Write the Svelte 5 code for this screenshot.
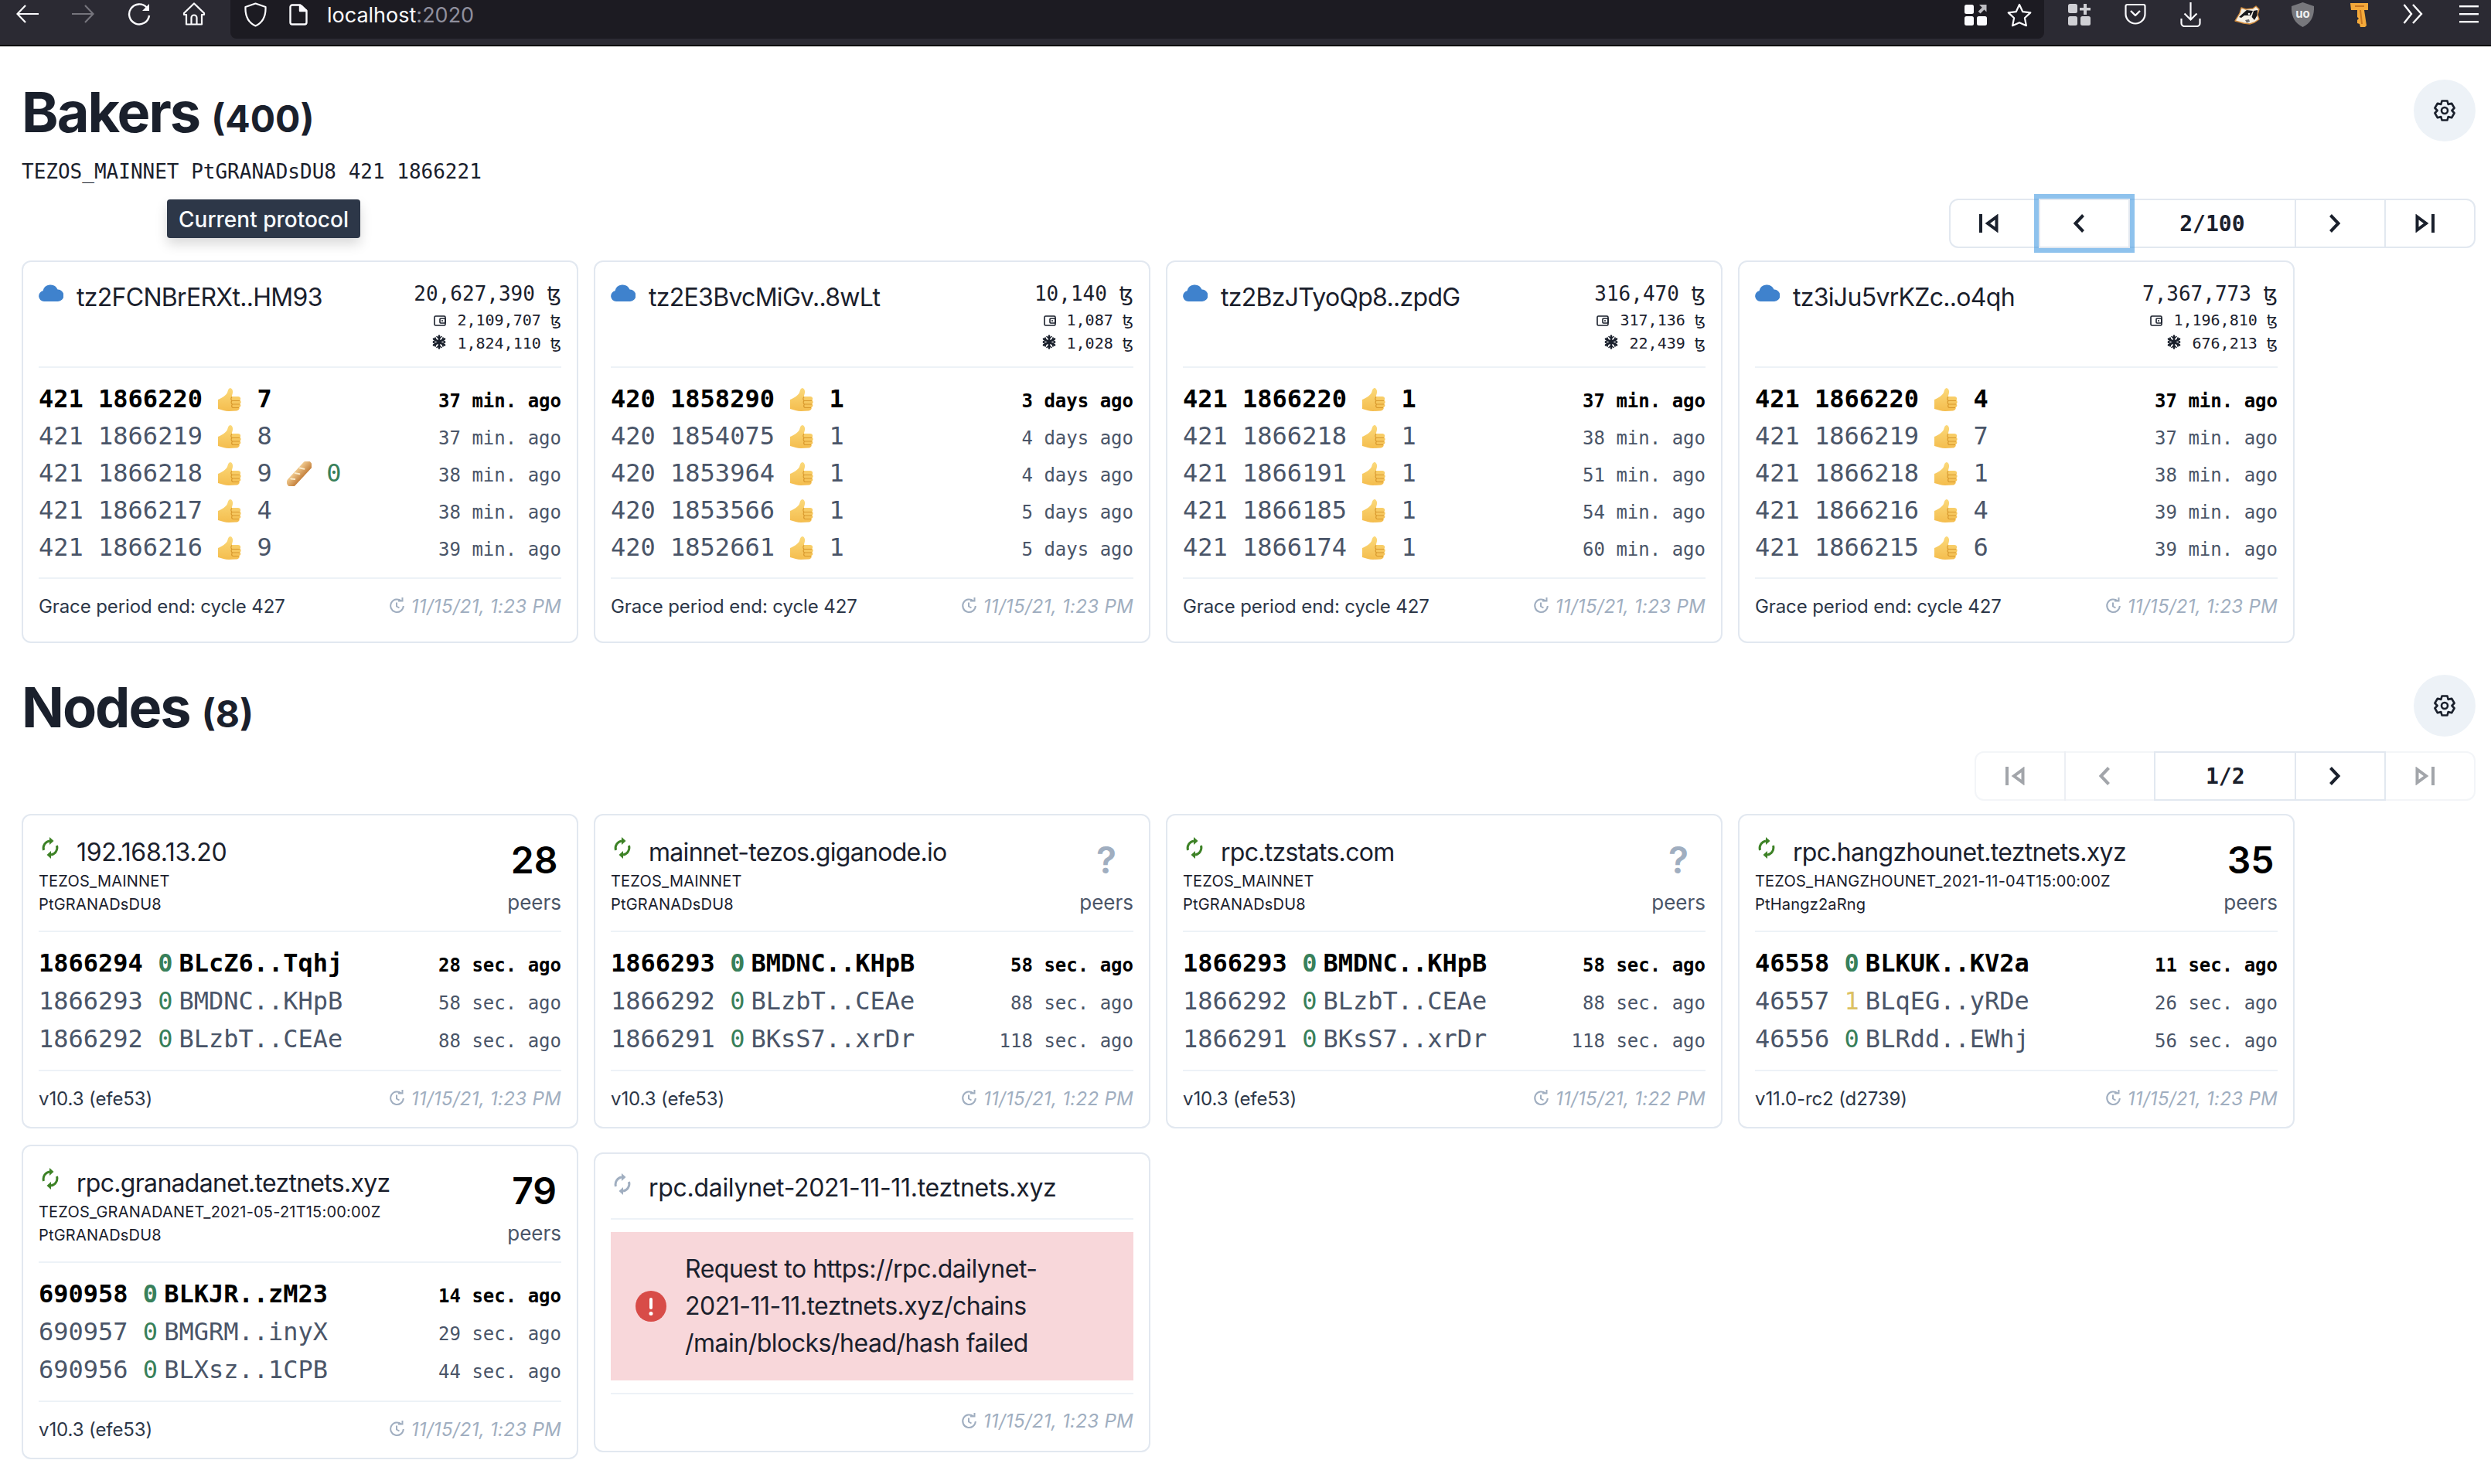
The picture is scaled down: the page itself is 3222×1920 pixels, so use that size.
<script>
	const grace = 'Grace period end: cycle 427';

	const bakers = [
		{
			addr: 'tz2FCNBrERXt..HM93', total: '20,627,390', spendable: '2,109,707', frozen: '1,824,110',
			rows: [
				['421 1866220', 7, '37 min. ago'],
				['421 1866219', 8, '37 min. ago'],
				['421 1866218', 9, '38 min. ago', 0],
				['421 1866217', 4, '38 min. ago'],
				['421 1866216', 9, '39 min. ago']
			]
		},
		{
			addr: 'tz2E3BvcMiGv..8wLt', total: '10,140', spendable: '1,087', frozen: '1,028',
			rows: [
				['420 1858290', 1, '3 days ago'],
				['420 1854075', 1, '4 days ago'],
				['420 1853964', 1, '4 days ago'],
				['420 1853566', 1, '5 days ago'],
				['420 1852661', 1, '5 days ago']
			]
		},
		{
			addr: 'tz2BzJTyoQp8..zpdG', total: '316,470', spendable: '317,136', frozen: '22,439',
			rows: [
				['421 1866220', 1, '37 min. ago'],
				['421 1866218', 1, '38 min. ago'],
				['421 1866191', 1, '51 min. ago'],
				['421 1866185', 1, '54 min. ago'],
				['421 1866174', 1, '60 min. ago']
			]
		},
		{
			addr: 'tz3iJu5vrKZc..o4qh', total: '7,367,773', spendable: '1,196,810', frozen: '676,213',
			rows: [
				['421 1866220', 4, '37 min. ago'],
				['421 1866219', 7, '37 min. ago'],
				['421 1866218', 1, '38 min. ago'],
				['421 1866216', 4, '39 min. ago'],
				['421 1866215', 6, '39 min. ago']
			]
		}
	];

	const giga = [
		['1866293', 0, 'BMDNC..KHpB', '58 sec. ago'],
		['1866292', 0, 'BLzbT..CEAe', '88 sec. ago'],
		['1866291', 0, 'BKsS7..xrDr', '118 sec. ago']
	];

	const nodes = [
		{
			host: '192.168.13.20', chain: 'TEZOS_MAINNET', proto: 'PtGRANADsDU8', peers: '28', version: 'v10.3 (efe53)', at: '1:23',
			rows: [
				['1866294', 0, 'BLcZ6..Tqhj', '28 sec. ago'],
				['1866293', 0, 'BMDNC..KHpB', '58 sec. ago'],
				['1866292', 0, 'BLzbT..CEAe', '88 sec. ago']
			]
		},
		{ host: 'mainnet-tezos.giganode.io', chain: 'TEZOS_MAINNET', proto: 'PtGRANADsDU8', peers: '?', version: 'v10.3 (efe53)', at: '1:22', rows: giga },
		{ host: 'rpc.tzstats.com', chain: 'TEZOS_MAINNET', proto: 'PtGRANADsDU8', peers: '?', version: 'v10.3 (efe53)', at: '1:22', rows: giga },
		{
			host: 'rpc.hangzhounet.teztnets.xyz', chain: 'TEZOS_HANGZHOUNET_2021-11-04T15:00:00Z', proto: 'PtHangz2aRng', peers: '35', version: 'v11.0-rc2 (d2739)', at: '1:23',
			rows: [
				['46558', 0, 'BLKUK..KV2a', '11 sec. ago'],
				['46557', 1, 'BLqEG..yRDe', '26 sec. ago'],
				['46556', 0, 'BLRdd..EWhj', '56 sec. ago']
			]
		},
		{
			host: 'rpc.granadanet.teztnets.xyz', chain: 'TEZOS_GRANADANET_2021-05-21T15:00:00Z', proto: 'PtGRANADsDU8', peers: '79', version: 'v10.3 (efe53)', at: '1:23',
			rows: [
				['690958', 0, 'BLKJR..zM23', '14 sec. ago'],
				['690957', 0, 'BMGRM..inyX', '29 sec. ago'],
				['690956', 0, 'BLXsz..1CPB', '44 sec. ago']
			]
		}
	];

	// six flat teeth around a ring
	function gearPath() {
		let d = '';
		for (let i = 0; i < 6; i++) {
			const a = (i * Math.PI) / 3 - Math.PI / 2;
			const pts = [[9.4, -0.52], [13, -0.27], [13, 0.27], [9.4, 0.52]];
			for (const [r, o] of pts) {
				const x = 14 + r * Math.cos(a + o);
				const y = 14 + r * Math.sin(a + o);
				d += (d ? 'L' : 'M') + x.toFixed(2) + ' ' + y.toFixed(2);
			}
		}
		return d + 'Z';
	}
	const gear = gearPath();
</script>

{#snippet settings()}
	<button class="gear-btn" type="button" aria-label="Settings">
		<svg width="28" height="28" viewBox="0 0 28 28" fill="none" stroke="#1a202c" stroke-width="2.6" stroke-linejoin="round">
			<path d={gear} />
			<circle cx="14" cy="14" r="4" />
		</svg>
	</button>
{/snippet}

{#snippet firstIcon()}
	<svg width="25" height="24" viewBox="0 0 25 24"><rect x="0" y="0" width="4" height="24" fill="currentColor" /><path d="M22.5 3.5v17L11 12z" fill="none" stroke="currentColor" stroke-width="4" /></svg>
{/snippet}
{#snippet lastIcon()}
	<svg width="25" height="24" viewBox="0 0 25 24"><rect x="21" y="0" width="4" height="24" fill="currentColor" /><path d="M2.5 3.5v17L14 12z" fill="none" stroke="currentColor" stroke-width="4" /></svg>
{/snippet}
{#snippet prevIcon()}
	<svg width="16" height="24" viewBox="0 0 16 24"><path d="M13.5 1.5L3.5 12l10 10.500" fill="none" stroke="currentColor" stroke-width="4" /></svg>
{/snippet}
{#snippet nextIcon()}
	<svg width="16" height="24" viewBox="0 0 16 24"><path d="M2.500 1.500L12.500 12l-10 10.500" fill="none" stroke="currentColor" stroke-width="4" /></svg>
{/snippet}

{#snippet clock()}
	<svg class="clock" width="19" height="20" viewBox="0 0 19 20" fill="none" stroke="#a0aec0" stroke-width="2">
		<path d="M15 3.500A8.300 8.300 0 1 0 17.800 10" />
		<path d="M11 3.500h5.500V-1" />
		<path d="M9 5.500V10.500l3.500 2" />
	</svg>
{/snippet}

{#snippet sync(color)}
	<svg class="status sync" width="24" height="28" viewBox="0 0 24 28" fill="none" stroke={color} stroke-width="3">
		<path d="M3.500 17A9.500 9.500 0 0 1 11 5" />
		<path d="M20.500 11A9.500 9.500 0 0 1 13 23" />
		<path d="M11 0l5.500 5L11 10z" fill={color} stroke="none" />
		<path d="M13 18l-5.500 5 5.500 5z" fill={color} stroke="none" />
	</svg>
{/snippet}

{#snippet thumb()}
	<svg class="emoji" width="32" height="32" viewBox="0 0 32 32">
		<defs>
			<linearGradient id="thumbfill" x1="0" y1="0" x2="0" y2="1"><stop offset="0" stop-color="#fbd97a" /><stop offset="1" stop-color="#f4bd4e" /></linearGradient>
		</defs>
		<path d="M1 16C6 14 11 11 13 7C14 4 14 2 16.500 1C19 1 20.500 4 20 7C19.600 9 19 10.500 19 12L27 12C30 12 31 15 29.500 16.500C31 18 31 20.500 29.500 21.500C31 23 30.500 25.500 28.500 26C29.500 28 27.500 30.500 25 30.500L15 31C10 31 6 29 1 28Z" fill="url(#thumbfill)" />
		<path d="M19 17.500H29M19.500 22H29M20 26.500H28M19 12.500C17.500 14 17.500 16 19 17.500C17.500 19 18 21 19.500 22C18.500 23.500 18.500 25.500 20 26.500" fill="none" stroke="#d8982c" stroke-width="1.200" />
	</svg>
{/snippet}

{#snippet baguette()}
	<svg class="emoji" width="32" height="32" viewBox="0 0 32 32">
		<defs>
			<linearGradient id="breadfill" x1="0" y1="0" x2="0" y2="1"><stop offset="0" stop-color="#f0c98d" /><stop offset="1" stop-color="#c4803c" /></linearGradient>
		</defs>
		<g transform="rotate(-47 16 16)">
			<rect x="-5" y="10" width="42" height="12.500" rx="6.200" fill="url(#breadfill)" />
			<path d="M4 12.500l3 4M13 11.500l3 5M22 11.500l3 5" stroke="#fbeccb" stroke-width="2" stroke-linecap="round" />
		</g>
	</svg>
{/snippet}

{#snippet pager(page, disabled)}
	<div class="pager">
		<button class="pg ico" class:off={disabled.includes('first')} type="button" aria-label="First">{@render firstIcon()}</button>
		<button class="pg ico" class:off={disabled.includes('prev')} class:focus={!disabled.includes('prev')} type="button" aria-label="Previous">{@render prevIcon()}</button>
		<button class="pg num" type="button">{page}</button>
		<button class="pg ico" class:off={disabled.includes('next')} type="button" aria-label="Next">{@render nextIcon()}</button>
		<button class="pg ico" class:off={disabled.includes('last')} type="button" aria-label="Last">{@render lastIcon()}</button>
	</div>
{/snippet}

<header class="chrome">
	<svg class="ci" style="margin-left:21px" width="29" height="30" viewBox="0 0 29 30" fill="none" stroke="#fbfbfe" stroke-width="2.200"><path d="M29 15H2M12 4L1.500 15 12 26" /></svg>
	<svg class="ci" style="margin-left:43px" width="29" height="30" viewBox="0 0 29 30" fill="none" stroke="#75747c" stroke-width="2.200"><path d="M0 15H27M17 4l10.500 11L17 26" /></svg>
	<svg class="ci" style="margin-left:43px" width="30" height="30" viewBox="0 0 30 30" fill="none" stroke="#fbfbfe" stroke-width="2.400"><path d="M25 7A13 13 0 1 0 28 17" /><path d="M28 2v9H19z" fill="#fbfbfe" stroke="none" /></svg>
	<svg class="ci" style="margin-left:41px" width="30" height="30" viewBox="0 0 30 30" fill="none" stroke="#fbfbfe" stroke-width="2.200" stroke-linejoin="round"><path d="M15 1.500L2 14v2h3v12.500h20V16h3v-2z" /><path d="M11.500 28.500V20a3.500 3.500 0 0 1 7 0v8.500" /></svg>
	<div class="urlbar">
		<svg width="29" height="32" viewBox="0 0 29 32" fill="none" stroke="#fbfbfe" stroke-width="2.200" stroke-linejoin="round"><path d="M14.500 1.500L27.500 6c.5 11-3 20-13 24.500C4.500 26 1 17 1.500 6z" /></svg>
		<svg style="margin-left:29px" width="24" height="28" viewBox="0 0 24 28" fill="none" stroke="#fbfbfe" stroke-width="2.400" stroke-linejoin="round"><path d="M4 1.500h10v7.500h8.500V24a2.500 2.500 0 0 1-2.500 2.500H4A2.500 2.500 0 0 1 1.500 24V4A2.500 2.500 0 0 1 4 1.500z" /><path d="M14 1.500l8.500 7.500" /><path d="M14 1.500h2.500l6 6V9H14z" fill="#fbfbfe" stroke="none" /></svg>
		<span class="url">localhost<span class="port">:2020</span></span>
		<svg class="push" width="29" height="28" viewBox="0 0 29 28" fill="#fbfbfe"><rect width="12" height="12" rx="2.500" y="1" /><rect x="0" y="16" width="12" height="12" rx="2.500" /><rect x="16" y="16" width="13" height="12" rx="2.500" /><path d="M19 1h9.500v9.500l-3-3-5 5-2.800-2.800 5-5z" fill="#bdbdc2" /></svg>
		<svg style="margin-left:26px" width="32" height="31" viewBox="0 0 32 31" fill="none" stroke="#fbfbfe" stroke-width="2.200" stroke-linejoin="round"><path d="M16 2l4.300 9.200 10 1.200-7.400 6.900 2 9.900L16 25.300l-8.900 3.900 2-9.900-7.400-6.900 10-1.200z" /></svg>
	</div>
	<svg class="ci" style="margin-left:31px" width="29" height="30" viewBox="0 0 29 30" fill="#cfcfd4"><rect y="2" width="12" height="12" rx="2.500" /><rect y="18" width="12" height="12" rx="2.500" /><rect x="16" y="18" width="13" height="12" rx="2.500" /><path d="M20 2h4v5h5v3.500h-5V16h-4v-5.500h-5V7h5z" /></svg>
	<svg class="ci" style="margin-left:44px" width="28" height="30" viewBox="0 0 28 30" fill="none" stroke="#fbfbfe" stroke-width="2.200" stroke-linejoin="round"><path d="M3.500 3h21A2 2 0 0 1 26.500 5v10a12.500 12.500 0 0 1-25 0V5a2 2 0 0 1 2-2z" /><path d="M8 11l6 6 6-6" stroke-width="2.400" /></svg>
	<svg class="ci" style="margin-left:44px" width="27" height="32" viewBox="0 0 27 32" fill="none" stroke="#fbfbfe" stroke-width="2.200"><path d="M13.500 0v22M5.500 14.500l8 8 8-8" /><path d="M1.500 21v6a4 4 0 0 0 4 4h16a4 4 0 0 0 4-4v-6" /></svg>
	<svg class="ci badger" style="margin-left:43px" width="33" height="25" viewBox="0 0 33 25">
		<path d="M1 20L7 10 9 3 15 5 24 4 28 1 32 5 30 12 32 18 26 22 20 24 12 23Z" fill="#f5f0e5" stroke="#d08a3c" stroke-width="1.400" stroke-linejoin="round" />
		<path d="M6 15L16 6 24 7 21 13 13 13 9 16Z" fill="#19191c" />
		<path d="M25 7L30 6 29.500 13 26 19 22.500 15Z" fill="#19191c" />
		<circle cx="19" cy="11" r="1.300" fill="#fff" />
		<path d="M14 19l5-1 1 3-4 1.500z" fill="#6a6a6e" />
	</svg>
	<svg class="ci" style="margin-left:41px" width="29" height="32" viewBox="0 0 29 32">
		<path d="M14.500 0L29 5c.5 12-3 21-14.500 27C3 26-.5 17 0 5z" fill="#77777c" />
		<text x="14.500" y="20" text-anchor="middle" font-family="Inter, sans-serif" font-size="15" font-weight="700" fill="#f0f0f0">uo</text>
	</svg>
	<svg class="ci" style="margin-left:47px" width="23" height="32" viewBox="0 0 23 32">
		<path d="M0 1h23v9h-5l3 20-2 2h-6l-1-4-3-1v-4l2-2-2-2V10H1z" fill="#f4a93a" />
		<path d="M6 4h12v2H6zM12 10h2l2 18h-2z" fill="#c9761f" />
	</svg>
	<svg class="ci" style="margin-left:45px" width="26" height="30" viewBox="0 0 26 30" fill="none" stroke="#fbfbfe" stroke-width="2.400"><path d="M1.500 3L11 15 1.500 27M13 3L24 15 13 27" /></svg>
	<svg class="ci" style="margin-left:47px" width="25" height="30" viewBox="0 0 25 30" fill="#fbfbfe"><rect y="4" width="25" height="2.400" /><rect y="14" width="25" height="2.400" /><rect y="24" width="25" height="2.400" /></svg>
</header>

<main class="page">
	<section class="bakers-sec">
		<div class="sec-head">
			<h1>Bakers <small>(400)</small></h1>
			{@render settings()}
		</div>
		<div class="proto-line">TEZOS_MAINNET PtGRANADsDU8 421 1866221</div>
		<div class="pager-row">
			<div class="tooltip">Current protocol</div>
			{@render pager('2/100', [])}
		</div>
		<div class="cards">
			{#each bakers as b}
				<article class="card baker">
					<div class="head">
						<div class="host">
							<svg class="status cloud" width="32" height="22" viewBox="0 0 32 22"><path d="M7 22a7 7 0 0 1-1.500-13.800A10 10 0 0 1 24.500 6.600 7.600 7.600 0 0 1 25 22z" fill="#3f82cd" /></svg>
							<span>{b.addr}</span>
						</div>
						<div class="stakes">
							<div class="stake big">{b.total} <span class="tez">ꜩ</span></div>
							<div class="stake">
								<svg class="mini" width="16" height="14" viewBox="0 0 16 14" fill="none" stroke="#1a202c" stroke-width="1.600"><rect x="1" y="1" width="14" height="12" rx="1.500" /><rect x="8" y="4" width="7" height="6" rx="1" /><circle cx="11" cy="7" r="1" fill="#1a202c" stroke="none" /></svg>
								{b.spendable} <span class="tez">ꜩ</span>
							</div>
							<div class="stake">
								<svg class="mini" width="18" height="19" viewBox="0 0 18 19" fill="none" stroke="#1a202c" stroke-width="2.600" stroke-linecap="round"><path d="M9 1.500v16M2 5.500l14 8M16 5.500l-14 8" /><path d="M6 2.500l3 2.500 3-2.500M6 16.500l3-2.500 3 2.500M1.500 9l3.500-1.500L4 4M16.500 9L13 7.500 14 4M1.500 10l3.500 1.500L4 15M16.500 10L13 11.500 14 15" stroke-width="1.600" /></svg>
								{b.frozen} <span class="tez">ꜩ</span>
							</div>
						</div>
					</div>
					<hr />
					<div class="rows">
						{#each b.rows as r, i}
							<div class="row" class:top={i === 0}>
								<span class="left">{r[0]} {@render thumb()} {r[1]}{#if r[3] !== undefined}{' '}{@render baguette()} <span class="ok">{r[3]}</span>{/if}</span>
								<span class="ago">{r[2]}</span>
							</div>
						{/each}
					</div>
					<hr />
					<div class="foot">
						<span>{grace}</span>
						<span class="stamp">{@render clock()}11/15/21, 1:23 PM</span>
					</div>
				</article>
			{/each}
		</div>
	</section>

	<section class="nodes-sec">
		<div class="sec-head">
			<h1>Nodes <small>(8)</small></h1>
			{@render settings()}
		</div>
		<div class="pager-row">
			{@render pager('1/2', ['first', 'prev', 'last'])}
		</div>
		<div class="cards">
			{#each nodes as n}
				<article class="card node">
					<div class="head">
						<div class="who">
							<div class="host" class:numeric={/\d\d/.test(n.host)}>
								{@render sync('#3d8226')}
								<span>{n.host}</span>
							</div>
							<div class="meta">{n.chain}</div>
							<div class="meta">{n.proto}</div>
						</div>
						<div class="peers">
							<div class="count" class:unknown={n.peers === '?'}>{n.peers}</div>
							<div class="peers-lbl">peers</div>
						</div>
					</div>
					<hr />
					<div class="rows">
						{#each n.rows as r, i}
							<div class="row" class:top={i === 0}>
								<span class="left">{r[0]} <span class={r[1] === 0 ? 'ok' : 'warn'}>{r[1]}</span><span class="hash">{r[2]}</span></span>
								<span class="ago">{r[3]}</span>
							</div>
						{/each}
					</div>
					<hr />
					<div class="foot">
						<span>{n.version}</span>
						<span class="stamp">{@render clock()}11/15/21, {n.at} PM</span>
					</div>
				</article>
			{/each}

			<article class="card node failed">
				<div class="head">
					<div class="host numeric">
						{@render sync('#a0aec0')}
						<span>rpc.dailynet-2021-11-11.teztnets.xyz</span>
					</div>
				</div>
				<hr />
				<div class="alert">
					<svg width="40" height="40" viewBox="0 0 40 40"><circle cx="20" cy="20" r="20" fill="#d84c48" /><rect x="18" y="9" width="4" height="15" rx="2" fill="#fff" /><circle cx="20" cy="29.500" r="2.500" fill="#fff" /></svg>
					<p>Request to https://rpc.dailynet-<br />2021-11-11.teztnets.xyz/chains<br />/main/blocks/head/hash failed</p>
				</div>
				<hr />
				<div class="foot end">
					<span class="stamp">{@render clock()}11/15/21, 1:23 PM</span>
				</div>
			</article>
		</div>
	</section>
</main>

<style>
	:global(body) {
		margin: 0;
		background: #ffffff;
		color: #1a202c;
		font-family: Inter, "Noto Sans", sans-serif;
	}

	.chrome {
		display: flex;
		align-items: flex-start;
		height: 58px;
		background: #2b2a33;
		border-bottom: 2px solid #0c0c0d;
	}

	.ci {
		flex-shrink: 0;
		margin-top: 3px;
	}

	.ci.badger {
		margin-top: 7px;
	}

	.urlbar {
		display: flex;
		align-items: center;
		flex: none;
		width: 2346px;
		height: 50px;
		margin-left: 32px;
		padding: 0 16px 12px 18px;
		box-sizing: border-box;
		background: #1c1b22;
		border-radius: 0 0 8px 8px;
	}

	.url {
		margin-left: 25px;
		font-size: 27px;
		color: #fbfbfe;
	}

	.port {
		color: #8f8f9d;
	}

	.push {
		margin-left: auto;
	}

	.page {
		padding: 0 20px 0 28px;
	}

	.bakers-sec {
		padding-top: 43px;
	}

	.nodes-sec {
		padding-top: 41px;
	}

	.sec-head {
		display: flex;
		justify-content: space-between;
		align-items: center;
		height: 80px;
	}

	h1 {
		margin: 0;
		padding-top: 12px;
		font-size: 72px;
		line-height: 80px;
		font-weight: 700;
		letter-spacing: -2px;
		color: #1a202c;
	}

	h1 small {
		font-size: 48px;
		letter-spacing: 0;
	}

	.gear-btn {
		display: flex;
		align-items: center;
		justify-content: center;
		width: 80px;
		height: 80px;
		padding: 0;
		border: 0;
		border-radius: 50%;
		background: #edf2f7;
	}

	.proto-line {
		margin-top: 19px;
		font-family: "DejaVu Sans Mono", monospace;
		font-size: 26px;
		line-height: 40px;
	}

	.pager-row {
		position: relative;
		display: flex;
		justify-content: flex-end;
		margin-top: 15px;
		margin-bottom: 16px;
	}

	.nodes-sec .pager-row {
		margin-top: 19px;
		margin-bottom: 17px;
	}

	.tooltip {
		position: absolute;
		left: 188px;
		top: 1px;
		width: 250px;
		height: 50px;
		padding-top: 2px;
		box-sizing: border-box;
		display: flex;
		align-items: center;
		justify-content: center;
		background: #2d3748;
		color: #f7fafc;
		font-size: 28px;
		font-weight: 500;
		border-radius: 4px;
		box-shadow: 0 8px 16px rgba(0, 0, 0, 0.15);
	}

	.pager {
		display: flex;
		height: 64px;
	}

	.pg {
		display: flex;
		align-items: center;
		justify-content: center;
		box-sizing: border-box;
		height: 64px;
		margin-left: -2px;
		border: 2px solid #e2e8f0;
		background: #ffffff;
		color: #1a202c;
	}

	.pg.ico {
		width: 118px;
		padding: 0 14px 0 0;
	}

	.pg:first-child {
		border-radius: 12px 0 0 12px;
	}

	.pg:last-child {
		border-radius: 0 12px 12px 0;
	}

	.pg.num {
		padding: 0 64.500px;
		font-family: "DejaVu Sans Mono", monospace;
		font-size: 28px;
		font-weight: 700;
	}

	.pg.off {
		opacity: 0.4;
	}

	.pg.focus {
		z-index: 1;
		box-shadow: 0 0 0 6px rgba(66, 153, 225, 0.6);
	}

	.cards {
		display: flex;
		flex-wrap: wrap;
		align-items: center;
		gap: 21px 20px;
	}

	.card {
		width: 720px;
		box-sizing: border-box;
		padding: 20px 20px 19px;
		border: 2px solid #e2e8f0;
		border-radius: 12px;
	}

	hr {
		margin: 0;
		border: 0;
		border-top: 2px solid #edf2f7;
	}

	.head {
		display: flex;
		justify-content: space-between;
	}

	.host {
		display: flex;
		align-items: center;
		height: 46px;
		font-size: 32px;
		letter-spacing: -0.7px;
		color: #1a202c;
		white-space: nowrap;
	}

	.host.numeric {
		letter-spacing: -0.3px;
	}

	.status {
		margin-bottom: 10px;
		flex-shrink: 0;
	}

	.cloud {
		margin-right: 17px;
	}

	.sync {
		margin-left: 3px;
		margin-right: 22px;
	}

	.baker .head {
		height: 100px;
		margin-bottom: 15px;
	}

	.baker .host {
		margin-top: 2px;
	}

	.stakes {
		padding-top: 2px;
		font-family: "DejaVu Sans Mono", monospace;
		font-size: 20px;
		line-height: 30px;
		text-align: right;
	}

	.stake {
		white-space: nowrap;
	}

	.stake.big {
		font-size: 26px;
		line-height: 38px;
	}

	.tez {
		font-family: "DejaVu Sans Mono", "DejaVu Sans", "Noto Sans", monospace;
	}

	.mini {
		vertical-align: -1px;
		margin-right: 2px;
	}

	.rows {
		display: flex;
		flex-direction: column;
		margin: 16px 0 15px;
	}

	.row {
		display: flex;
		justify-content: space-between;
		align-items: baseline;
		height: 48px;
		line-height: 48px;
		font-family: "DejaVu Sans Mono", monospace;
		color: #4a5568;
		white-space: pre;
	}

	.node .row {
		height: 49px;
		line-height: 49px;
	}

	.row.top {
		color: #000000;
		font-weight: 700;
	}

	.left {
		font-size: 32px;
	}

	.ago {
		font-size: 24px;
	}

	.emoji {
		vertical-align: -6px;
	}

	.ok {
		color: #38805a;
	}

	.warn {
		color: #dcc163;
	}

	.hash {
		margin-left: 8px;
	}

	.foot {
		display: flex;
		justify-content: space-between;
		align-items: center;
		height: 36px;
		margin-top: 17px;
		font-size: 24px;
		letter-spacing: -0.1px;
		color: #2d3748;
	}

	.baker .foot {
		margin-bottom: 9px;
	}

	.foot.end {
		justify-content: flex-end;
	}

	.stamp {
		display: flex;
		align-items: center;
		font-style: italic;
		letter-spacing: 0.3px;
		color: #a0aec0;
	}

	.clock {
		margin-right: 9px;
		overflow: visible;
	}

	.node .host {
		margin-top: 4px;
	}

	.meta {
		font-size: 20px;
		line-height: 30px;
		letter-spacing: 0.2px;
		color: #1a202c;
	}

	.node .head {
		margin-bottom: 19px;
	}

	.peers {
		display: flex;
		flex-direction: column;
		align-items: center;
		margin-top: 8px;
	}

	.count {
		font-size: 48px;
		font-weight: 600;
		line-height: 60px;
		color: #000000;
	}

	.count.unknown {
		color: #a0aec0;
		font-weight: 600;
	}

	.peers-lbl {
		margin-top: 10px;
		font-size: 26px;
		line-height: 30px;
		color: #4a5568;
	}

	.failed {
		padding-bottom: 20px;
	}

	.failed .head {
		margin-bottom: 16px;
	}

	.failed .host {
		margin-top: 1px;
	}

	.alert {
		display: flex;
		align-items: center;
		gap: 24px;
		height: 192px;
		margin: 16px 0;
		padding: 0 32px;
		background: #f8d7da;
	}

	.alert p {
		margin: 0;
		font-size: 32px;
		line-height: 48px;
		letter-spacing: -0.5px;
		color: #1a202c;
	}
</style>
